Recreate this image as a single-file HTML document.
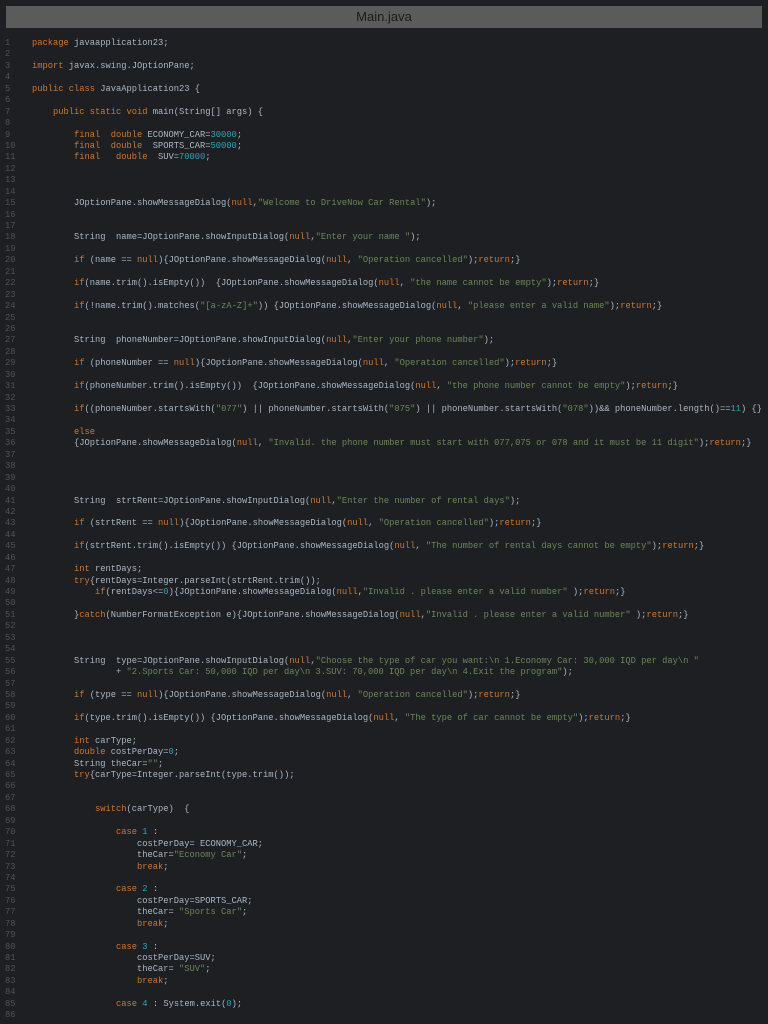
<!DOCTYPE html>
<html><head><meta charset="utf-8"><style>
html,body{margin:0;padding:0;background:#1e1f22;width:768px;height:1024px;overflow:hidden}
.bar{position:absolute;left:6px;top:6px;width:756px;height:22px;background:#5b5b5b;color:#1b1b1b;font:13px "Liberation Sans",sans-serif;text-align:center;line-height:22px}
.code{position:absolute;left:0;top:38px;width:768px;font:8.75px/11.45px "Liberation Mono",monospace;color:#a9b7c6;overflow:hidden}
.ln{position:absolute;left:5px;width:20px;color:#4f5257;white-space:pre}
.l{position:absolute;left:32px;white-space:pre}
.k{color:#cc7832}.s{color:#6a8759}.n{color:#2aa6b8}
.r{height:11.45px;position:relative;line-height:11.45px}
</style></head><body>
<div class="bar">Main.java</div>
<div class="code">
<div class="r"><span class="ln">1</span><span class="l"><span class="k">package</span> javaapplication23;</span></div>
<div class="r"><span class="ln">2</span></div>
<div class="r"><span class="ln">3</span><span class="l"><span class="k">import</span> javax.swing.JOptionPane;</span></div>
<div class="r"><span class="ln">4</span></div>
<div class="r"><span class="ln">5</span><span class="l"><span class="k">public class</span> JavaApplication23 {</span></div>
<div class="r"><span class="ln">6</span></div>
<div class="r"><span class="ln">7</span><span class="l">    <span class="k">public static void</span> main(String[] args) {</span></div>
<div class="r"><span class="ln">8</span></div>
<div class="r"><span class="ln">9</span><span class="l">        <span class="k">final  double</span> ECONOMY_CAR=<span class="n">30000</span>;</span></div>
<div class="r"><span class="ln">10</span><span class="l">        <span class="k">final  double</span>  SPORTS_CAR=<span class="n">50000</span>;</span></div>
<div class="r"><span class="ln">11</span><span class="l">        <span class="k">final   double</span>  SUV=<span class="n">70000</span>;</span></div>
<div class="r"><span class="ln">12</span></div>
<div class="r"><span class="ln">13</span></div>
<div class="r"><span class="ln">14</span></div>
<div class="r"><span class="ln">15</span><span class="l">        JOptionPane.showMessageDialog(<span class="k">null</span>,<span class="s">"Welcome to DriveNow Car Rental"</span>);</span></div>
<div class="r"><span class="ln">16</span></div>
<div class="r"><span class="ln">17</span></div>
<div class="r"><span class="ln">18</span><span class="l">        String  name=JOptionPane.showInputDialog(<span class="k">null</span>,<span class="s">"Enter your name "</span>);</span></div>
<div class="r"><span class="ln">19</span></div>
<div class="r"><span class="ln">20</span><span class="l">        <span class="k">if</span> (name == <span class="k">null</span>){JOptionPane.showMessageDialog(<span class="k">null</span>, <span class="s">"Operation cancelled"</span>);<span class="k">return</span>;}</span></div>
<div class="r"><span class="ln">21</span></div>
<div class="r"><span class="ln">22</span><span class="l">        <span class="k">if</span>(name.trim().isEmpty())  {JOptionPane.showMessageDialog(<span class="k">null</span>, <span class="s">"the name cannot be empty"</span>);<span class="k">return</span>;}</span></div>
<div class="r"><span class="ln">23</span></div>
<div class="r"><span class="ln">24</span><span class="l">        <span class="k">if</span>(!name.trim().matches(<span class="s">"[a-zA-Z]+"</span>)) {JOptionPane.showMessageDialog(<span class="k">null</span>, <span class="s">"please enter a valid name"</span>);<span class="k">return</span>;}</span></div>
<div class="r"><span class="ln">25</span></div>
<div class="r"><span class="ln">26</span></div>
<div class="r"><span class="ln">27</span><span class="l">        String  phoneNumber=JOptionPane.showInputDialog(<span class="k">null</span>,<span class="s">"Enter your phone number"</span>);</span></div>
<div class="r"><span class="ln">28</span></div>
<div class="r"><span class="ln">29</span><span class="l">        <span class="k">if</span> (phoneNumber == <span class="k">null</span>){JOptionPane.showMessageDialog(<span class="k">null</span>, <span class="s">"Operation cancelled"</span>);<span class="k">return</span>;}</span></div>
<div class="r"><span class="ln">30</span></div>
<div class="r"><span class="ln">31</span><span class="l">        <span class="k">if</span>(phoneNumber.trim().isEmpty())  {JOptionPane.showMessageDialog(<span class="k">null</span>, <span class="s">"the phone number cannot be empty"</span>);<span class="k">return</span>;}</span></div>
<div class="r"><span class="ln">32</span></div>
<div class="r"><span class="ln">33</span><span class="l">        <span class="k">if</span>((phoneNumber.startsWith(<span class="s">"077"</span>) || phoneNumber.startsWith(<span class="s">"075"</span>) || phoneNumber.startsWith(<span class="s">"078"</span>))&amp;&amp; phoneNumber.length()==<span class="n">11</span>) {}</span></div>
<div class="r"><span class="ln">34</span></div>
<div class="r"><span class="ln">35</span><span class="l">        <span class="k">else</span></span></div>
<div class="r"><span class="ln">36</span><span class="l">        {JOptionPane.showMessageDialog(<span class="k">null</span>, <span class="s">"Invalid. the phone number must start with 077,075 or 078 and it must be 11 digit"</span>);<span class="k">return</span>;}</span></div>
<div class="r"><span class="ln">37</span></div>
<div class="r"><span class="ln">38</span></div>
<div class="r"><span class="ln">39</span></div>
<div class="r"><span class="ln">40</span></div>
<div class="r"><span class="ln">41</span><span class="l">        String  strtRent=JOptionPane.showInputDialog(<span class="k">null</span>,<span class="s">"Enter the number of rental days"</span>);</span></div>
<div class="r"><span class="ln">42</span></div>
<div class="r"><span class="ln">43</span><span class="l">        <span class="k">if</span> (strtRent == <span class="k">null</span>){JOptionPane.showMessageDialog(<span class="k">null</span>, <span class="s">"Operation cancelled"</span>);<span class="k">return</span>;}</span></div>
<div class="r"><span class="ln">44</span></div>
<div class="r"><span class="ln">45</span><span class="l">        <span class="k">if</span>(strtRent.trim().isEmpty()) {JOptionPane.showMessageDialog(<span class="k">null</span>, <span class="s">"The number of rental days cannot be empty"</span>);<span class="k">return</span>;}</span></div>
<div class="r"><span class="ln">46</span></div>
<div class="r"><span class="ln">47</span><span class="l">        <span class="k">int</span> rentDays;</span></div>
<div class="r"><span class="ln">48</span><span class="l">        <span class="k">try</span>{rentDays=Integer.parseInt(strtRent.trim());</span></div>
<div class="r"><span class="ln">49</span><span class="l">            <span class="k">if</span>(rentDays&lt;=<span class="n">0</span>){JOptionPane.showMessageDialog(<span class="k">null</span>,<span class="s">"Invalid . please enter a valid number"</span> );<span class="k">return</span>;}</span></div>
<div class="r"><span class="ln">50</span></div>
<div class="r"><span class="ln">51</span><span class="l">        }<span class="k">catch</span>(NumberFormatException e){JOptionPane.showMessageDialog(<span class="k">null</span>,<span class="s">"Invalid . please enter a valid number"</span> );<span class="k">return</span>;}</span></div>
<div class="r"><span class="ln">52</span></div>
<div class="r"><span class="ln">53</span></div>
<div class="r"><span class="ln">54</span></div>
<div class="r"><span class="ln">55</span><span class="l">        String  type=JOptionPane.showInputDialog(<span class="k">null</span>,<span class="s">"Choose the type of car you want:\n 1.Economy Car: 30,000 IQD per day\n "</span></span></div>
<div class="r"><span class="ln">56</span><span class="l">                + <span class="s">"2.Sports Car: 50,000 IQD per day\n 3.SUV: 70,000 IQD per day\n 4.Exit the program"</span>);</span></div>
<div class="r"><span class="ln">57</span></div>
<div class="r"><span class="ln">58</span><span class="l">        <span class="k">if</span> (type == <span class="k">null</span>){JOptionPane.showMessageDialog(<span class="k">null</span>, <span class="s">"Operation cancelled"</span>);<span class="k">return</span>;}</span></div>
<div class="r"><span class="ln">59</span></div>
<div class="r"><span class="ln">60</span><span class="l">        <span class="k">if</span>(type.trim().isEmpty()) {JOptionPane.showMessageDialog(<span class="k">null</span>, <span class="s">"The type of car cannot be empty"</span>);<span class="k">return</span>;}</span></div>
<div class="r"><span class="ln">61</span></div>
<div class="r"><span class="ln">62</span><span class="l">        <span class="k">int</span> carType;</span></div>
<div class="r"><span class="ln">63</span><span class="l">        <span class="k">double</span> costPerDay=<span class="n">0</span>;</span></div>
<div class="r"><span class="ln">64</span><span class="l">        String theCar=<span class="s">""</span>;</span></div>
<div class="r"><span class="ln">65</span><span class="l">        <span class="k">try</span>{carType=Integer.parseInt(type.trim());</span></div>
<div class="r"><span class="ln">66</span></div>
<div class="r"><span class="ln">67</span></div>
<div class="r"><span class="ln">68</span><span class="l">            <span class="k">switch</span>(carType)  {</span></div>
<div class="r"><span class="ln">69</span></div>
<div class="r"><span class="ln">70</span><span class="l">                <span class="k">case</span> <span class="n">1</span> :</span></div>
<div class="r"><span class="ln">71</span><span class="l">                    costPerDay= ECONOMY_CAR;</span></div>
<div class="r"><span class="ln">72</span><span class="l">                    theCar=<span class="s">"Economy Car"</span>;</span></div>
<div class="r"><span class="ln">73</span><span class="l">                    <span class="k">break</span>;</span></div>
<div class="r"><span class="ln">74</span></div>
<div class="r"><span class="ln">75</span><span class="l">                <span class="k">case</span> <span class="n">2</span> :</span></div>
<div class="r"><span class="ln">76</span><span class="l">                    costPerDay=SPORTS_CAR;</span></div>
<div class="r"><span class="ln">77</span><span class="l">                    theCar= <span class="s">"Sports Car"</span>;</span></div>
<div class="r"><span class="ln">78</span><span class="l">                    <span class="k">break</span>;</span></div>
<div class="r"><span class="ln">79</span></div>
<div class="r"><span class="ln">80</span><span class="l">                <span class="k">case</span> <span class="n">3</span> :</span></div>
<div class="r"><span class="ln">81</span><span class="l">                    costPerDay=SUV;</span></div>
<div class="r"><span class="ln">82</span><span class="l">                    theCar= <span class="s">"SUV"</span>;</span></div>
<div class="r"><span class="ln">83</span><span class="l">                    <span class="k">break</span>;</span></div>
<div class="r"><span class="ln">84</span></div>
<div class="r"><span class="ln">85</span><span class="l">                <span class="k">case</span> <span class="n">4</span> : System.exit(<span class="n">0</span>);</span></div>
<div class="r"><span class="ln">86</span></div>
</div>
</body></html>
